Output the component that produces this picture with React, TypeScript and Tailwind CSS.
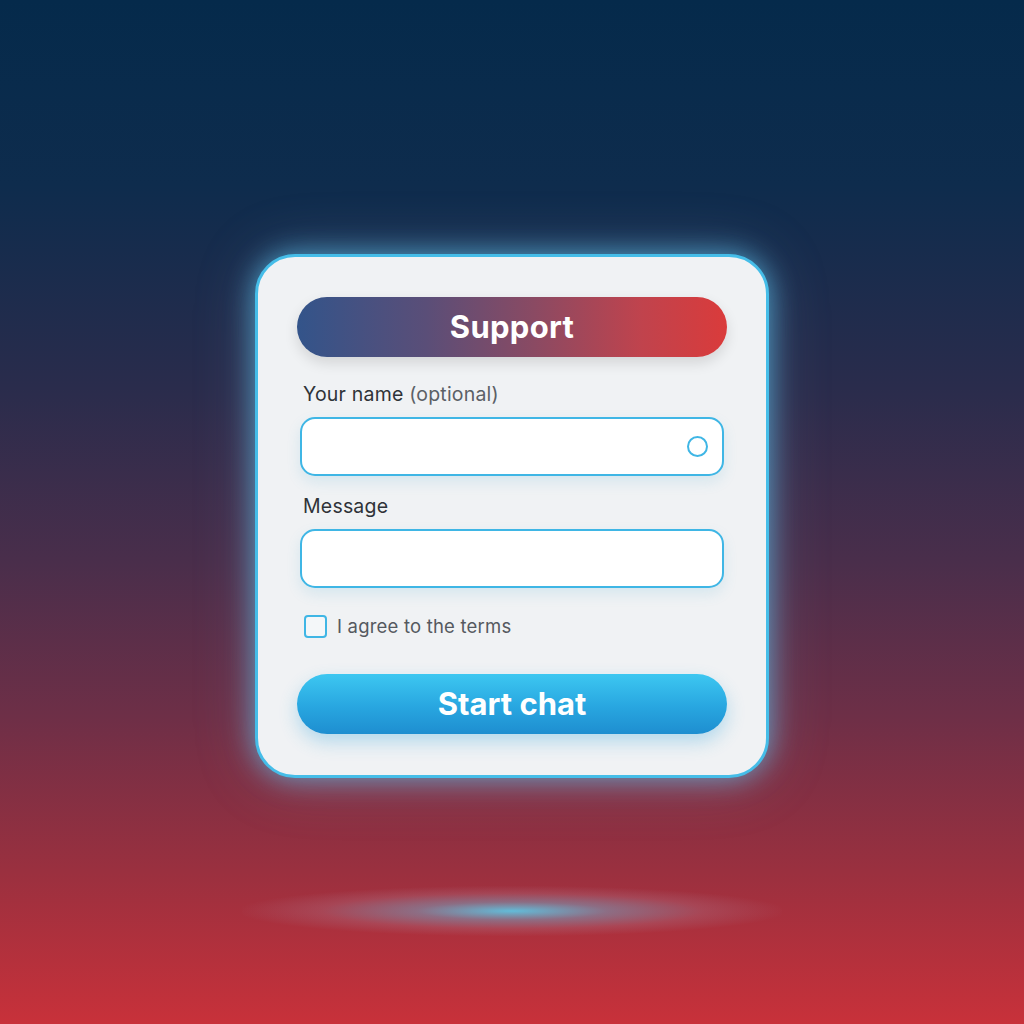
import React from 'react';

export default function App() {
  return (
    <div
      className="w-[1024px] h-[1024px] overflow-hidden flex flex-col items-center bg-[linear-gradient(to_bottom,#052a4b_0%,#0e2c4d_18%,#2a2c4c_38%,#4a2e4b_55%,#6e2f47_70%,#9a303f_85%,#c8313a_100%)]"
      style={{ fontFamily: 'Inter, "Noto Sans", sans-serif' }}
    >
      {/* card */}
      <div className="mt-[254px] w-[514px] h-[524px] rounded-[40px] border-[3px] border-[#45bde8] bg-[#f0f2f4] shadow-[0_0_28px_rgba(90,200,245,0.7),0_0_60px_rgba(150,190,220,0.25)] px-[39px] pt-[40px] flex flex-col">
        <div className="h-[60px] rounded-full bg-[linear-gradient(to_right,#33548a_0%,#5a4e78_30%,#8a4a63_55%,#c0434d_80%,#da3b3b_100%)] flex items-center justify-center shadow-[0_6px_14px_rgba(0,0,0,0.12)]">
          <span className="text-white text-[31px] font-bold tracking-[0.3px]">Support</span>
        </div>

        <div className="mt-[24px] ml-[6px] text-[19.5px] leading-[26px] tracking-[0.2px] text-[#2f3338]">
          Your name <span className="text-[#5b6066]">(optional)</span>
        </div>
        <div className="mt-[10px] mx-[3px] h-[59px] rounded-[15px] border-2 border-[#3fb6e5] bg-white flex items-center justify-end pr-[14px] shadow-[0_6px_14px_rgba(70,170,210,0.15)]">
          <div className="w-[21px] h-[21px] rounded-full border-2 border-[#3fb6e5]" />
        </div>

        <div className="mt-[17px] ml-[6px] text-[19.5px] leading-[26px] tracking-[0.2px] text-[#2f3338]">Message</div>
        <div className="mt-[10px] mx-[3px] h-[59px] rounded-[15px] border-2 border-[#3fb6e5] bg-white shadow-[0_6px_14px_rgba(70,170,210,0.15)]" />

        <div className="mt-[26px] ml-[7px] flex items-center gap-[10px]">
          <div className="w-[23px] h-[23px] rounded-[4px] border-2 border-[#3fb6e5] bg-[#f4f7f9]" />
          <span className="text-[18.5px] leading-[24px] tracking-[0.2px] text-[#55595f]">I agree to the terms</span>
        </div>

        <div className="mt-[36px] h-[60px] rounded-full bg-[linear-gradient(to_bottom,#3dc7f1_0%,#28a6e0_55%,#1e8ed0_100%)] flex items-center justify-center shadow-[0_8px_18px_rgba(40,160,220,0.3)]">
          <span className="text-white text-[31px] font-bold">Start chat</span>
        </div>
      </div>

      {/* floor glow */}
      <div className="mt-[108px] w-[540px] h-[50px] rounded-full bg-[radial-gradient(ellipse_at_center,rgba(95,195,225,0.95)_0%,rgba(120,160,190,0.55)_25%,rgba(170,110,130,0.35)_50%,rgba(170,80,100,0)_72%)]" />
    </div>
  );
}
